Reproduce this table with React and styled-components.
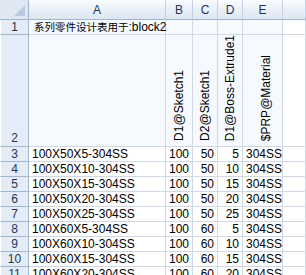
import React from 'react'
import styled, { createGlobalStyle } from 'styled-components'

const GlobalStyle = createGlobalStyle`
  html, body {
    margin: 0;
    padding: 0;
    background: #ffffff;
    overflow: hidden;
  }
`;

const Sheet = styled.div`
  display: grid;
  grid-template-columns: 29px 137px 27px 25px 25px 40px 1fr;
  grid-template-rows: 20px 15px 112px repeat(9, 15px);
  width: 306px;
  height: 275px;
  overflow: hidden;
  font-family: "Liberation Sans", Arial, "Noto Sans CJK SC", sans-serif;
  font-size: 12px;
  color: #000000;
`;

const Corner = styled.div`
  position: relative;
  background: #dfe7f2;
  border-right: 1px solid #9eb6ce;
  border-bottom: 1px solid #9eb6ce;
  box-sizing: border-box;
  &::after {
    content: '';
    position: absolute;
    right: 3px;
    bottom: 3px;
    width: 0;
    height: 0;
    border-left: 11px solid transparent;
    border-bottom: 11px solid #b8cbe2;
  }
`;

const ColHead = styled.div`
  display: flex;
  align-items: center;
  justify-content: center;
  padding-top: 1px;
  box-sizing: border-box;
  background: linear-gradient(#f9fbfd, #e9eff7 55%, #dde6f1);
  border-right: 1px solid #c5d2e3;
  border-bottom: 1px solid #9eb6ce;
  color: #1f3556;
  font-size: 12px;
`;

const RowHead = styled.div`
  display: flex;
  align-items: ${({ $bottom }) => ($bottom ? 'flex-end' : 'center')};
  justify-content: center;
  padding-bottom: ${({ $bottom }) => ($bottom ? '1px' : '0')};
  box-sizing: border-box;
  background: #e4ecf7;
  border-right: 1px solid #9eb6ce;
  border-bottom: 1px solid #9eb6ce;
  border-left: 1px solid #ffffff;
  color: #1f3556;
  font-size: 12px;
`;

const Cell = styled.div`
  display: flex;
  align-items: center;
  justify-content: ${({ $align }) => ($align === 'right' ? 'flex-end' : 'flex-start')};
  padding: 0 ${({ $align }) => ($align === 'right' ? '3px' : '0')} 0 ${({ $align }) => ($align === 'right' ? '0' : '3px')};
  box-sizing: border-box;
  background: ${({ $tint }) => ($tint ? '#f6f9fd' : '#ffffff')};
  border-right: 1px solid #d0d7e5;
  border-bottom: 1px solid #d0d7e5;
  white-space: nowrap;
  overflow: ${({ $spill }) => ($spill ? 'visible' : 'hidden')};
  position: relative;
  z-index: ${({ $spill }) => ($spill ? 1 : 0)};
  line-height: 14px;
`;

const Title = styled.span`
  position: relative;
  left: 2px;
  font-size: 12px;
`;

const Cjk = styled.span`
  font-family: "Noto Sans CJK SC", sans-serif;
  font-size: 10.5px;
`;

const VerticalCell = styled.div`
  display: flex;
  align-items: flex-end;
  justify-content: center;
  padding-bottom: 5px;
  padding-left: ${({ $shift }) => $shift || 0}px;
  box-sizing: border-box;
  background: #f6f9fd;
  border-right: 1px solid #d0d7e5;
  border-bottom: 1px solid #d0d7e5;
  overflow: hidden;
`;

const VerticalText = styled.span`
  writing-mode: vertical-rl;
  transform: rotate(180deg);
  white-space: nowrap;
  line-height: 14px;
`;

const columns = ['A', 'B', 'C', 'D', 'E', '']

const rows = [
  ['100X50X5-304SS', 100, 50, 5],
  ['100X50X10-304SS', 100, 50, 10],
  ['100X50X15-304SS', 100, 50, 15],
  ['100X50X20-304SS', 100, 50, 20],
  ['100X50X25-304SS', 100, 50, 25],
  ['100X60X5-304SS', 100, 60, 5],
  ['100X60X10-304SS', 100, 60, 10],
  ['100X60X15-304SS', 100, 60, 15],
  ['100X60X20-304SS', 100, 60, 20],
]

const params = [
  { label: 'D1@Sketch1' },
  { label: 'D2@Sketch1' },
  { label: 'D1@Boss-Extrude1' },
  { label: '$PRP@Material', shift: 6 },
]

export default function App() {
  return (
    <>
      <GlobalStyle />
      <Sheet>
        <Corner />
        {columns.map((c, i) => (
          <ColHead key={i}>{c}</ColHead>
        ))}

        <RowHead>1</RowHead>
        <Cell $tint $spill>
          <Title><Cjk>系列零件设计表用于</Cjk>:block2</Title>
        </Cell>
        <Cell $tint />
        <Cell $tint />
        <Cell $tint />
        <Cell $tint />
        <Cell />

        <RowHead $bottom>2</RowHead>
        <Cell $tint />
        {params.map(p => (
          <VerticalCell key={p.label} $shift={p.shift}>
            <VerticalText>{p.label}</VerticalText>
          </VerticalCell>
        ))}
        <Cell />

        {rows.map((r, i) => (
          <React.Fragment key={r[0]}>
            <RowHead>{i + 3}</RowHead>
            <Cell>{r[0]}</Cell>
            <Cell $align="right">{r[1]}</Cell>
            <Cell $align="right">{r[2]}</Cell>
            <Cell $align="right">{r[3]}</Cell>
            <Cell>304SS</Cell>
            <Cell />
          </React.Fragment>
        ))}
      </Sheet>
    </>
  )
}
